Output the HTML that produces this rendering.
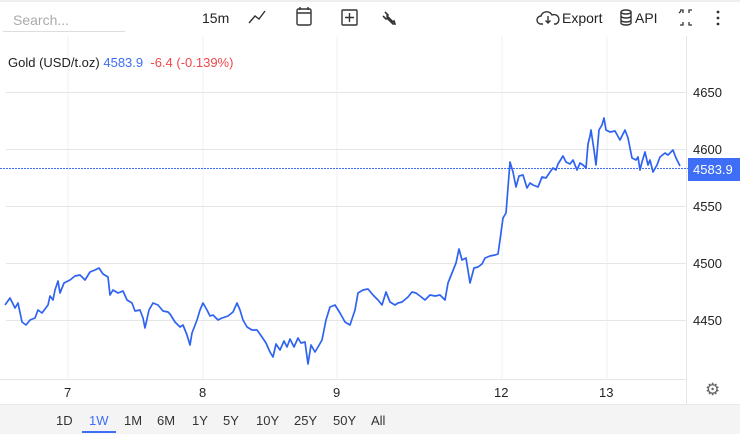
<!DOCTYPE html>
<html><head><style>
*{margin:0;padding:0;box-sizing:border-box}
body{width:740px;height:434px;overflow:hidden;background:#fff;font-family:"Liberation Sans",sans-serif;position:relative;color:#222}
.a{position:absolute;white-space:nowrap}
</style></head><body>
<div class="a" style="left:0;top:0;width:740px;height:2px;background:#eee"></div>
<div class="a" style="left:13px;top:12px;font-size:14px;color:#aaa">Search...</div>
<div class="a" style="left:3px;top:31px;width:122px;height:1px;background:#ddd"></div>
<div class="a" style="left:202px;top:10px;font-size:14px">15m</div>
<svg class="a" style="left:0;top:0" width="740" height="40">
<g fill="none" stroke="#333" stroke-width="1.4">
<path d="M249 23 L255 16 L259 19 L265 11"/>
<rect x="297" y="9" width="14" height="16" rx="1.5"/><path d="M297 13h14M300 7v3M308 7v3"/>
<rect x="342" y="10" width="15" height="15" rx="1"/><path d="M349.5 13v9M345 17.5h9"/>
<path d="M385 12 l3 3 l-1 1 l6 6 l1 -1 l1 3 l-2 0 l-6 -6 l-1 1 l-3 -3" stroke-width="1.6"/>
<path d="M543 24 h-2 a4 4 0 0 1 0-8 a6 6 0 0 1 11-1 a4 4 0 0 1 4 9 h-2" />
<path d="M548 16v7M545.5 20.5l2.5 2.5 2.5-2.5"/>
<ellipse cx="626" cy="12" rx="5" ry="2"/><path d="M621 12v11a5 2 0 0 0 10 0v-11M621 16a5 2 0 0 0 10 0M621 20a5 2 0 0 0 10 0"/>
<path d="M680 10h3v3M681 11l-2 2M680 25h3v-3M692 10h-3v3M692 25h-3v-3" stroke-width="1.3"/>
</g>
<circle cx="718" cy="12" r="1.4" fill="#333"/><circle cx="718" cy="18" r="1.4" fill="#333"/><circle cx="718" cy="24" r="1.4" fill="#333"/>
</svg>
<div class="a" style="left:562px;top:10px;font-size:14px">Export</div>
<div class="a" style="left:635px;top:10px;font-size:14px">API</div>

<svg class="a" style="left:0;top:36px" width="740" height="368" viewBox="0 36 740 368">
<g stroke="#edf1f7" stroke-width="1">
<path d="M68 36v344M203 36v344M337 36v344M502 36v344M607 36v344"/>
</g>
<g stroke="#e6e6e6" stroke-width="1">
<path d="M6 92.5h680M6 149.5h680M6 206.5h680M6 263.5h680M6 320.5h680"/>
<path d="M0 379.5h687"/>
<path d="M686.5 36v368"/>
</g>
<path d="M0 168.5h688" stroke="#3d6ef5" stroke-width="1" stroke-dasharray="2,1"/>
<polyline fill="none" stroke="#2e63f2" stroke-width="1.7" stroke-linejoin="round" points="5,305 10,298 15,308 18,303 22,322 26,325 30,320 35,318 38,310 42,313 48,305 50,296 53,300 55,290 58,281 60,293 64,283 70,280 75,276 80,275 85,280 90,272 95,270 99,268 103,274 108,277 110,295 113,290 118,293 123,291 127,300 132,303 135,311 140,310 143,318 145,328 149,310 153,303 158,305 163,311 168,312 170,314 175,322 180,327 183,325 187,335 190,345 192,333 197,320 200,310 203,303 207,310 210,316 213,315 218,320 222,318 228,316 233,312 237,303 240,310 243,320 247,327 252,330 257,330 262,337 266,343 270,352 273,357 276,344 280,350 284,341 287,347 290,339 294,347 298,338 301,343 305,342 308,364 311,345 315,352 318,347 322,340 326,320 330,307 335,305 340,313 345,322 350,325 355,310 358,293 363,290 368,289 373,295 378,300 382,305 386,292 390,302 395,305 398,303 402,302 408,297 412,292 416,293 420,296 425,300 430,295 435,296 440,295 445,300 448,283 452,273 456,263 459,249 462,260 466,258 470,283 474,268 478,267 482,264 485,258 490,256 495,255 498,254 500,240 503,218 506,213 510,162 513,172 516,187 519,176 523,175 527,188 530,183 533,185 538,187 542,177 546,178 550,172 553,168 556,170 558,164 563,156 566,162 570,164 573,160 577,170 580,163 583,165 586,168 588,144 590,136 591,130 594,150 596,165 599,130 602,125 604,118 606,130 610,132 615,131 620,140 625,130 628,138 632,158 636,160 638,157 640,170 642,162 645,152 648,165 650,160 653,172 657,165 660,157 665,153 668,155 673,150 676,158 680,166"/>
</svg>
<div class="a" style="left:8px;top:55px;font-size:13px">Gold (USD/t.oz) <span style="color:#3d6ef5">4583.9</span> &nbsp;<span style="color:#f0474a">-6.4 (-0.139%)</span></div>
<div class="a" style="left:693px;top:85px;font-size:13px">4650</div>
<div class="a" style="left:693px;top:142px;font-size:13px">4600</div>
<div class="a" style="left:693px;top:199px;font-size:13px">4550</div>
<div class="a" style="left:693px;top:256px;font-size:13px">4500</div>
<div class="a" style="left:693px;top:313px;font-size:13px">4450</div>
<div class="a" style="left:688px;top:158px;width:52px;height:23px;background:#3d6ef5;color:#fff;font-size:13px;padding:4px 0 0 5px">4583.9</div>
<div class="a" style="left:64px;top:385px;font-size:13px">7</div>
<div class="a" style="left:199px;top:385px;font-size:13px">8</div>
<div class="a" style="left:333px;top:385px;font-size:13px">9</div>
<div class="a" style="left:494px;top:385px;font-size:13px">12</div>
<div class="a" style="left:599px;top:385px;font-size:13px">13</div>
<div class="a" style="left:705px;top:380px;font-size:17px;color:#666">⚙</div>
<div class="a" style="left:0;top:404px;width:740px;height:30px;background:#f4f4f4;border-top:1px solid #e8e8e8"></div>
<div class="a" style="left:0;top:413px;font-size:13px;color:#333">
<span class="a" style="left:56px">1D</span>
<span class="a" style="left:89px;color:#3d6ef5">1W</span>
<span class="a" style="left:124px">1M</span>
<span class="a" style="left:157px">6M</span>
<span class="a" style="left:192px">1Y</span>
<span class="a" style="left:223px">5Y</span>
<span class="a" style="left:256px">10Y</span>
<span class="a" style="left:294px">25Y</span>
<span class="a" style="left:333px">50Y</span>
<span class="a" style="left:371px">All</span>
</div>
<div class="a" style="left:82px;top:431px;width:34px;height:2px;background:#3d6ef5"></div>
</body></html>
